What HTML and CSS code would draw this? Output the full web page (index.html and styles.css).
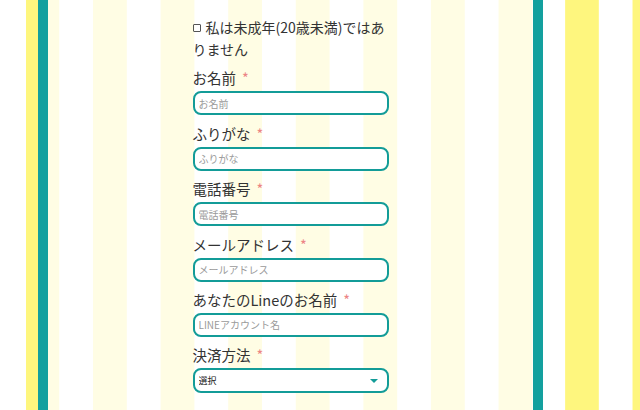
FILE: index.html
```html
<!DOCTYPE html>
<html lang="ja">

<head>
    <meta charset="UTF-8">
    <meta name="viewport" content="width=device-width, initial-scale=1.0">
    <title>お申し込みフォーム</title>
    <link rel="stylesheet" href="styles.css">
</head>

<body>
    <div class="frame">
        <form class="entry-form">
            <label class="agree"><span class="box"></span>私は未成年(20歳未満)ではありません</label>

            <div class="field">
                <label>お名前<span class="req">*</span></label>
                <input type="text" placeholder="お名前">
            </div>
            <div class="field">
                <label>ふりがな<span class="req">*</span></label>
                <input type="text" placeholder="ふりがな">
            </div>
            <div class="field">
                <label>電話番号<span class="req">*</span></label>
                <input type="tel" placeholder="電話番号">
            </div>
            <div class="field">
                <label>メールアドレス<span class="req">*</span></label>
                <input type="email" placeholder="メールアドレス">
            </div>
            <div class="field">
                <label>あなたのLineのお名前<span class="req">*</span></label>
                <input type="text" placeholder="LINEアカウント名">
            </div>
            <div class="field">
                <label>決済方法<span class="req">*</span></label>
                <div class="select-wrap">
                    <select>
                        <option>選択</option>
                        <option>クレジットカード</option>
                        <option>銀行振込</option>
                    </select>
                </div>
            </div>
        </form>
    </div>
</body>

</html>
```

FILE: styles.css
```css
body {
    margin: 0;
    height: 100vh;
    overflow: hidden;
    font-family: Meiryo, "Noto Sans CJK JP", "Noto Sans", sans-serif;
    color: #333;
    background-color: #fff;
    background-image: linear-gradient(90deg, #fef67e 0 34px, #fff 34px);
    background-size: 67.4px 100%;
    background-position: 26px 0;
}

.frame {
    box-sizing: border-box;
    width: 505px;
    min-height: 100%;
    margin-left: 38px;
    border-left: 10px solid #13a09e;
    border-right: 10px solid #13a09e;
    background-color: #fff;
    background-image: linear-gradient(90deg, #fffde4 0 33.8px, #fff 33.8px);
    background-size: 67.6px 100%;
    background-position: 45px 0;
}

.entry-form {
    width: 196px;
    margin: 0 auto;
    padding-top: 16px;
    display: flex;
    flex-direction: column;
    gap: 7.4px;
}

.agree {
    font-size: 14px;
    line-height: 22px;
}

.agree .box {
    display: inline-block;
    width: 6px;
    height: 6px;
    border: 1px solid #555;
    border-radius: 1px;
    margin-right: 5px;
    vertical-align: 1px;
}

.field label {
    display: block;
    font-size: 14.5px;
    line-height: 22px;
    margin-bottom: 2px;
}

.req {
    color: #ec8585;
    margin-left: 6px;
}

.field input,
.field select {
    display: block;
    box-sizing: border-box;
    width: 100%;
    height: 24px;
    margin: 0;
    padding: 0 4px;
    border: 2px solid #139c98;
    border-radius: 8px;
    background: #fff;
    font-family: inherit;
    font-size: 10px;
    color: #333;
    outline: none;
}

.field input::placeholder {
    color: #9a9a9a;
}

.select-wrap {
    position: relative;
}

.field select {
    height: 25px;
    font-size: 9px;
    color: #222;
    appearance: none;
    -webkit-appearance: none;
}

.select-wrap::after {
    content: "";
    position: absolute;
    right: 11px;
    top: 11px;
    border-left: 4px solid transparent;
    border-right: 4px solid transparent;
    border-top: 4px solid #139c98;
    pointer-events: none;
}
```
